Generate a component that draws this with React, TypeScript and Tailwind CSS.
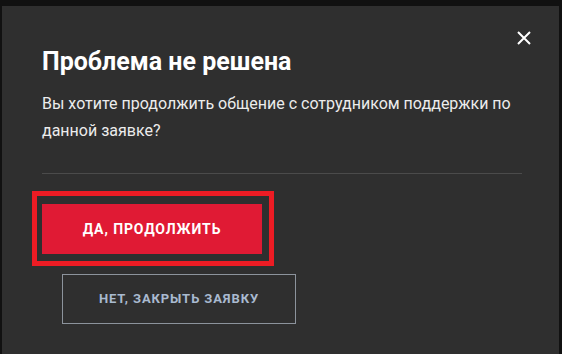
import React from "react";

export default function App() {
  return (
    <div className="w-[562px] h-[354px] bg-[#111111] overflow-hidden pl-[2px] pt-[6px] pr-[3px]">
      <div className="relative h-[348px] bg-[#2f2f2f] pl-[40px] pr-[37px] pt-[42px] font-['Roboto',sans-serif]">
        <button className="absolute left-[512px] top-[22px] w-[20px] h-[20px] flex items-center justify-center" aria-label="close">
          <svg width="14" height="14" viewBox="0 0 14 14" fill="none">
            <path d="M1 1L13 13M13 1L1 13" stroke="#ffffff" strokeWidth="2" />
          </svg>
        </button>
        <h2 className="text-[25px] leading-[28px] font-bold text-white m-0">Проблема не решена</h2>
        <p className="mt-[14px] text-[16px] leading-[27px] text-[#ececec]">
          Вы хотите продолжить общение с сотрудником поддержки по данной заявке?
        </p>
        <div className="mt-[29px] h-px bg-[#4b4b4b]" />
        <div className="mt-[17px] -ml-[10px] w-fit border-[5px] border-[#ed1c24] pl-[5px] pr-[7px] pt-[8px] pb-[7px]">
          <button className="w-[220px] h-[50px] bg-[#e01a34] text-white text-[14px] font-bold tracking-[0.9px] uppercase flex items-center justify-center">
            Да, продолжить
          </button>
        </div>
        <button className="mt-[8px] ml-[20px] w-[234px] h-[50px] border border-[#8c939c] text-[#a9bad0] text-[13px] font-bold tracking-[0.9px] uppercase flex items-center justify-center">
          Нет, закрыть заявку
        </button>
      </div>
    </div>
  );
}
